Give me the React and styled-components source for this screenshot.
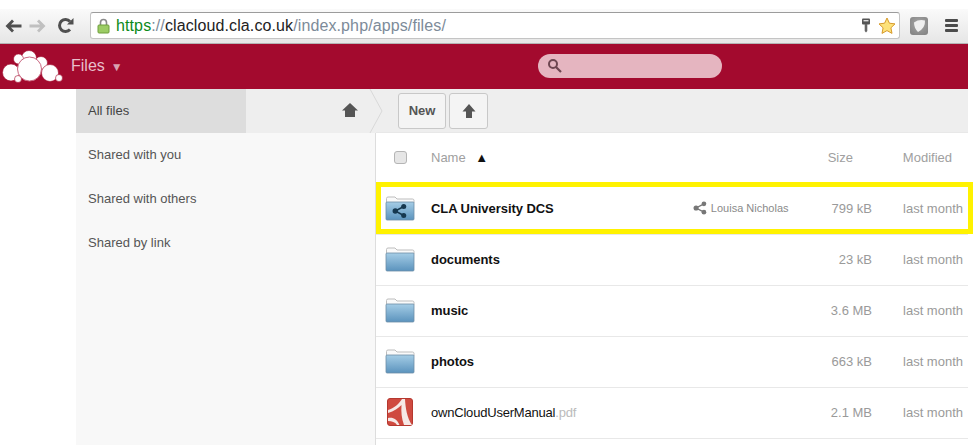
import React from 'react';
import styled, { createGlobalStyle } from 'styled-components';

const GlobalStyle = createGlobalStyle`
  html, body {
    margin: 0;
    padding: 0;
    background: #fff;
    overflow: hidden;
  }
  body {
    font-family: 'Liberation Sans', Arial, sans-serif;
  }
`;

const Page = styled.div`
  width: 968px;
  height: 445px;
  padding-top: 9px;
  box-sizing: border-box;
  overflow: visible;
`;

const BrowserBar = styled.div`
  height: 35px;
  box-sizing: border-box;
  display: flex;
  align-items: center;
  padding: 0 10px 1px 5px;
  background: linear-gradient(#fafafa, #e6e6e6);
  border-bottom: 1px solid #b4b4b4;
`;

const NavButton = styled.div`
  width: ${(p) => p.$w}px;
  display: flex;
  align-items: center;
`;

const AddressBar = styled.div`
  flex: 1;
  height: 27px;
  margin-left: 9px;
  box-sizing: border-box;
  display: flex;
  align-items: center;
  padding: 0 3px 0 6px;
  background: #fff;
  border: 1px solid #c4c4c4;
  border-top-color: #9c9c9c;
  border-radius: 3px;
  font-size: 16px;
  letter-spacing: 0.11px;
`;

const Url = styled.span`
  margin-left: 6px;
  flex: 1;
  color: #7d8b99;
  white-space: nowrap;
  b {
    font-weight: normal;
    color: #0b8a1a;
  }
  i {
    font-style: normal;
    color: #7d8b99;
  }
  em {
    font-style: normal;
    color: #222;
  }
`;

const ExtensionIcon = styled.div`
  width: 18px;
  height: 18px;
  margin-left: 10px;
  border-radius: 3px;
  background: radial-gradient(circle at 50% 40%, #a8a8a8, #7f7f7f);
  display: flex;
  align-items: center;
  justify-content: center;
`;

const MenuIcon = styled.div`
  width: 13px;
  margin-left: 17px;
  display: flex;
  flex-direction: column;
  gap: 2px;
  span {
    height: 3px;
    border-radius: 1px;
    background: #4c4c4c;
  }
`;

const Header = styled.header`
  height: 45px;
  position: relative;
  display: flex;
  align-items: center;
  background: #a30a2e;
`;

const Logo = styled.svg`
  flex: none;
`;

const AppMenu = styled.div`
  margin-left: 7px;
  margin-bottom: 1px;
  color: #e8bfca;
  font-size: 16px;
  display: flex;
  align-items: center;
  gap: 6px;
  span {
    font-size: 12px;
    margin-top: 2px;
    color: #d9a3b1;
  }
`;

const SearchBox = styled.div`
  position: absolute;
  left: 538px;
  top: 10px;
  width: 184px;
  height: 24px;
  border-radius: 12px;
  background: #e5b5c0;
  display: flex;
  align-items: center;
  padding-left: 9px;
  box-sizing: border-box;
`;

const Body = styled.div`
  display: grid;
  grid-template-columns: 76px 170px 130px 1fr;
  grid-template-rows: 44px 312px;
`;

const NavActive = styled.div`
  grid-column: 2;
  background: #ddd;
  color: #444;
  font-size: 13px;
  display: flex;
  align-items: center;
  padding: 0 0 2px 12px;
`;

const Crumb = styled.div`
  grid-column: 3;
  background: #eee;
  position: relative;
  display: flex;
  align-items: center;
  justify-content: flex-end;
  padding: 0 18px 2px 0;
`;

const CrumbChevron = styled.svg`
  position: absolute;
  right: -7px;
  top: 0;
`;

const Actions = styled.div`
  grid-column: 4;
  background: #eee;
  display: flex;
  align-items: center;
  padding-left: 22px;
  gap: 3px;
  border-bottom: 1px solid #e8e8e8;
  box-sizing: border-box;
`;

const ToolButton = styled.div`
  width: ${(p) => p.$w}px;
  height: 36px;
  box-sizing: border-box;
  border: 1px solid #c8c8c8;
  border-radius: 3px;
  background: #f4f4f4;
  color: #555;
  font-size: 13px;
  font-weight: bold;
  display: flex;
  align-items: center;
  justify-content: center;
`;

const Sidebar = styled.nav`
  grid-column: 2 / 4;
  background: #f8f8f8;
  border-right: 1px solid #ddd;
`;

const NavItem = styled.div`
  height: 44px;
  box-sizing: border-box;
  display: flex;
  align-items: center;
  padding: 0 0 2px 12px;
  color: #555;
  font-size: 13px;
`;

const Main = styled.main`
  grid-column: 4;
`;

const HeadRow = styled.div`
  height: 51px;
  box-sizing: border-box;
  padding-bottom: 2px;
  display: flex;
  align-items: center;
  color: #a0a0a0;
  font-size: 13px;
`;

const Check = styled.div`
  width: 11px;
  height: 11px;
  margin-left: 18px;
  border: 1px solid #b5b5b5;
  border-radius: 3px;
  background: #e6e6e6;
`;

const NameHead = styled.div`
  margin-left: 24px;
  flex: 1;
  span {
    margin-left: 6px;
    color: #111;
    font-size: 13px;
  }
`;

const SizeHead = styled.div`
  width: 50px;
  text-align: right;
`;

const ModifiedHead = styled.div`
  width: 99px;
  margin-right: 16px;
  text-align: right;
`;

const Row = styled.div`
  height: 51px;
  box-sizing: border-box;
  padding-bottom: 2px;
  position: relative;
  display: flex;
  align-items: center;
  border-bottom: 1px solid #e8e8e8;
  font-size: 13px;
`;

const Highlight = styled.div`
  position: absolute;
  left: 0;
  top: -2px;
  width: 597px;
  height: 52px;
  box-sizing: border-box;
  border: 5px solid #fff200;
`;

const IconCell = styled.div`
  width: 55px;
  padding-left: 9px;
  box-sizing: border-box;
  flex: none;
  display: flex;
`;

const FileName = styled.div`
  flex: 1;
  color: #111;
  font-weight: ${(p) => (p.$folder ? 'bold' : 'normal')};
  letter-spacing: ${(p) => (p.$folder ? '-0.06px' : '-0.2px')};
  span {
    color: #bbb;
  }
`;

const Share = styled.div`
  display: flex;
  align-items: center;
  gap: 4px;
  color: #8a8a8a;
  font-size: 11px;
  margin-right: 43px;
`;

const Size = styled.div`
  color: #9a9a9a;
  white-space: nowrap;
  text-align: right;
`;

const Modified = styled.div`
  width: 91px;
  margin-right: 5px;
  flex: none;
  text-align: right;
  color: #9a9a9a;
  white-space: nowrap;
`;

const PdfSvg = styled.svg`
  margin-left: 2px;
`;

const StarSvg = styled.svg`
  margin-left: 7px;
`;

const ShareGlyph = ({ size, color, x = 0, y = 0 }) => (
  <svg x={x} y={y} width={size} height={size} viewBox="0 0 16 16">
    <path d="M12.5 3.2 3.5 8l9 4.8" fill="none" stroke={color} strokeWidth="1.6" />
    <circle cx="12.5" cy="3.2" r="2.7" fill={color} />
    <circle cx="3.5" cy="8" r="2.9" fill={color} />
    <circle cx="12.5" cy="12.8" r="2.7" fill={color} />
  </svg>
);

const FolderIcon = ({ shared, id }) => (
  <svg width="30" height="26" viewBox="0 0 30 26">
    <defs>
      <linearGradient id={id} x1="0" y1="0" x2="0" y2="1">
        <stop offset="0" stopColor="#a5cde6" />
        <stop offset="1" stopColor="#5b93bd" />
      </linearGradient>
    </defs>
    <path d="M1.5 8V3.5Q1.5 2 3 2H10L12 4H27.5Q29 4 29 5.5V8Z" fill="#fafafa" stroke="#bdbdbd" />
    <rect x="1" y="7" width="28" height="18" rx="1" fill={`url(#${id})`} stroke="#6d8da6" strokeWidth="0.8" />
    {shared && <ShareGlyph size={15} color="#16384f" x={7} y={8.5} />}
  </svg>
);

const PdfIcon = () => (
  <PdfSvg width="26" height="28" viewBox="0 0 26 28">
    <rect x="0.5" y="0.5" width="25" height="27" rx="2.5" fill="#cf4a40" stroke="#b5382f" />
    <path d="M1 12C7 10 12 6 15 1H18C18.500 10 20 20 25 27H17C14.500 20 14 14 14.500 7 11.500 10 7 13.500 1 15Z" fill="#f6e8e6" />
    <path d="M1 20C6 19 10 21 12.500 27H10C8 24 5 23 1 23Z" fill="#f6e8e6" />
  </PdfSvg>
);

const rows = [
  { name: 'documents', size: '23 kB', folder: true },
  { name: 'music', size: '3.6 MB', folder: true },
  { name: 'photos', size: '663 kB', folder: true },
];

const App = () => (
  <Page>
    <GlobalStyle />
    <BrowserBar>
      <NavButton $w={24}>
        <svg width="17" height="14" viewBox="0 0 17 14">
          <path d="M7 0.500 0.500 7 7 13.500 9 11.500 6 8.500H16.500V5.500H6L9 2.500Z" fill="#505050" />
        </svg>
      </NavButton>
      <NavButton $w={28}>
        <svg width="17" height="14" viewBox="0 0 17 14">
          <path d="M10 0.500 16.500 7 10 13.500 8 11.500 11 8.500H.5V5.500H11L8 2.500Z" fill="#c0c0c0" />
        </svg>
      </NavButton>
      <NavButton $w={24}>
        <svg width="17" height="17" viewBox="0 0 17 17">
          <path d="M13 12.500A6 6 0 1 1 13 4.500" fill="none" stroke="#505050" strokeWidth="3" />
          <path d="M10 7.500H16.500V1Z" fill="#505050" />
        </svg>
      </NavButton>
      <AddressBar>
        <svg width="13" height="16" viewBox="0 0 13 16">
          <path d="M3.500 7V4.500a3 3 0 0 1 6 0V7" fill="none" stroke="#8a8a8a" strokeWidth="1.600" />
          <rect x="1" y="7" width="11" height="8" rx="1" fill="#9ccc65" stroke="#6f9f3c" />
        </svg>
        <Url><b>https</b><i>://</i><em>clacloud.cla.co.uk</em>/index.php/apps/files/</Url>
        <svg width="10" height="15" viewBox="0 0 10 15">
          <rect x="1" y="0.500" width="8" height="6" rx="1" fill="#555" />
          <rect x="2.500" y="2" width="5" height="1.400" fill="#ddd" />
          <path d="M3.700 6h2.600v7L5 14.500 3.700 13Z" fill="#666" />
        </svg>
        <StarSvg width="18" height="18" viewBox="0 0 18 18">
          <path d="M9 1l2.400 5.200 5.600.7-4.100 3.900 1.100 5.600L9 13.600l-5 2.800 1.100-5.600L1 6.900l5.600-.7Z" fill="#fde27a" stroke="#d79a2b" strokeWidth="1" />
        </StarSvg>
      </AddressBar>
      <ExtensionIcon>
        <svg width="13" height="14" viewBox="0 0 13 14">
          <path d="M1 3.500Q6 0 12 1.500 12.500 9 5 13 1 9 1 3.500Z" fill="#efefef" />
        </svg>
      </ExtensionIcon>
      <MenuIcon><span /><span /><span /></MenuIcon>
    </BrowserBar>

    <Header>
      <Logo width="64" height="45" viewBox="0 0 64 45" fill="#fff" stroke="#a30a2e" strokeWidth="0.6">
        <circle cx="29" cy="14" r="7.500" />
        <circle cx="18.500" cy="15" r="5" />
        <circle cx="41" cy="19" r="6.500" />
        <circle cx="11" cy="28.500" r="8.500" />
        <circle cx="18" cy="35" r="3.500" />
        <circle cx="50" cy="29" r="8.500" />
        <circle cx="59" cy="34" r="3.500" />
        <circle cx="29.500" cy="25" r="12" stroke="#c9667f" strokeWidth="1" />
      </Logo>
      <AppMenu>Files <span>▼</span></AppMenu>
      <SearchBox>
        <svg width="16" height="16" viewBox="0 0 16 16">
          <circle cx="6" cy="6" r="4" fill="none" stroke="#6d4650" strokeWidth="2" />
          <path d="M9 9l5 5" stroke="#6d4650" strokeWidth="2.200" />
        </svg>
      </SearchBox>
    </Header>

    <Body>
      <div />
      <NavActive>All files</NavActive>
      <Crumb>
        <svg width="16" height="14" viewBox="0 0 16 14">
          <path d="M8 0 0 7.500H3V14H13V7.500H16Z" fill="#555" />
        </svg>
        <CrumbChevron width="14" height="44" viewBox="0 0 14 44">
          <path d="M1 0 13 22 1 44" fill="#eee" stroke="#d8d8d8" />
        </CrumbChevron>
      </Crumb>
      <Actions>
        <ToolButton $w={48}>New</ToolButton>
        <ToolButton $w={39}>
          <svg width="14" height="16" viewBox="0 0 14 16">
            <path d="M7 1 13.500 8.500H10V15H4V8.500H.5Z" fill="#555" />
          </svg>
        </ToolButton>
      </Actions>

      <div />
      <Sidebar>
        <NavItem>Shared with you</NavItem>
        <NavItem>Shared with others</NavItem>
        <NavItem>Shared by link</NavItem>
      </Sidebar>
      <Main>
        <HeadRow>
          <Check />
          <NameHead>Name <span>▲</span></NameHead>
          <SizeHead>Size</SizeHead>
          <ModifiedHead>Modified</ModifiedHead>
        </HeadRow>
        <Row>
          <Highlight />
          <IconCell><FolderIcon shared id="folder-shared" /></IconCell>
          <FileName $folder>CLA University DCS</FileName>
          <Share><ShareGlyph size={14} color="#777" /> Louisa Nicholas</Share>
          <Size>799 kB</Size>
          <Modified>last month</Modified>
        </Row>
        {rows.map((row, index) => (
          <Row key={row.name}>
            <IconCell><FolderIcon id={`folder-${index}`} /></IconCell>
            <FileName $folder>{row.name}</FileName>
            <Size>{row.size}</Size>
            <Modified>last month</Modified>
          </Row>
        ))}
        <Row>
          <IconCell><PdfIcon /></IconCell>
          <FileName>ownCloudUserManual<span>.pdf</span></FileName>
          <Size>2.1 MB</Size>
          <Modified>last month</Modified>
        </Row>
      </Main>
    </Body>
  </Page>
);

export default App;
